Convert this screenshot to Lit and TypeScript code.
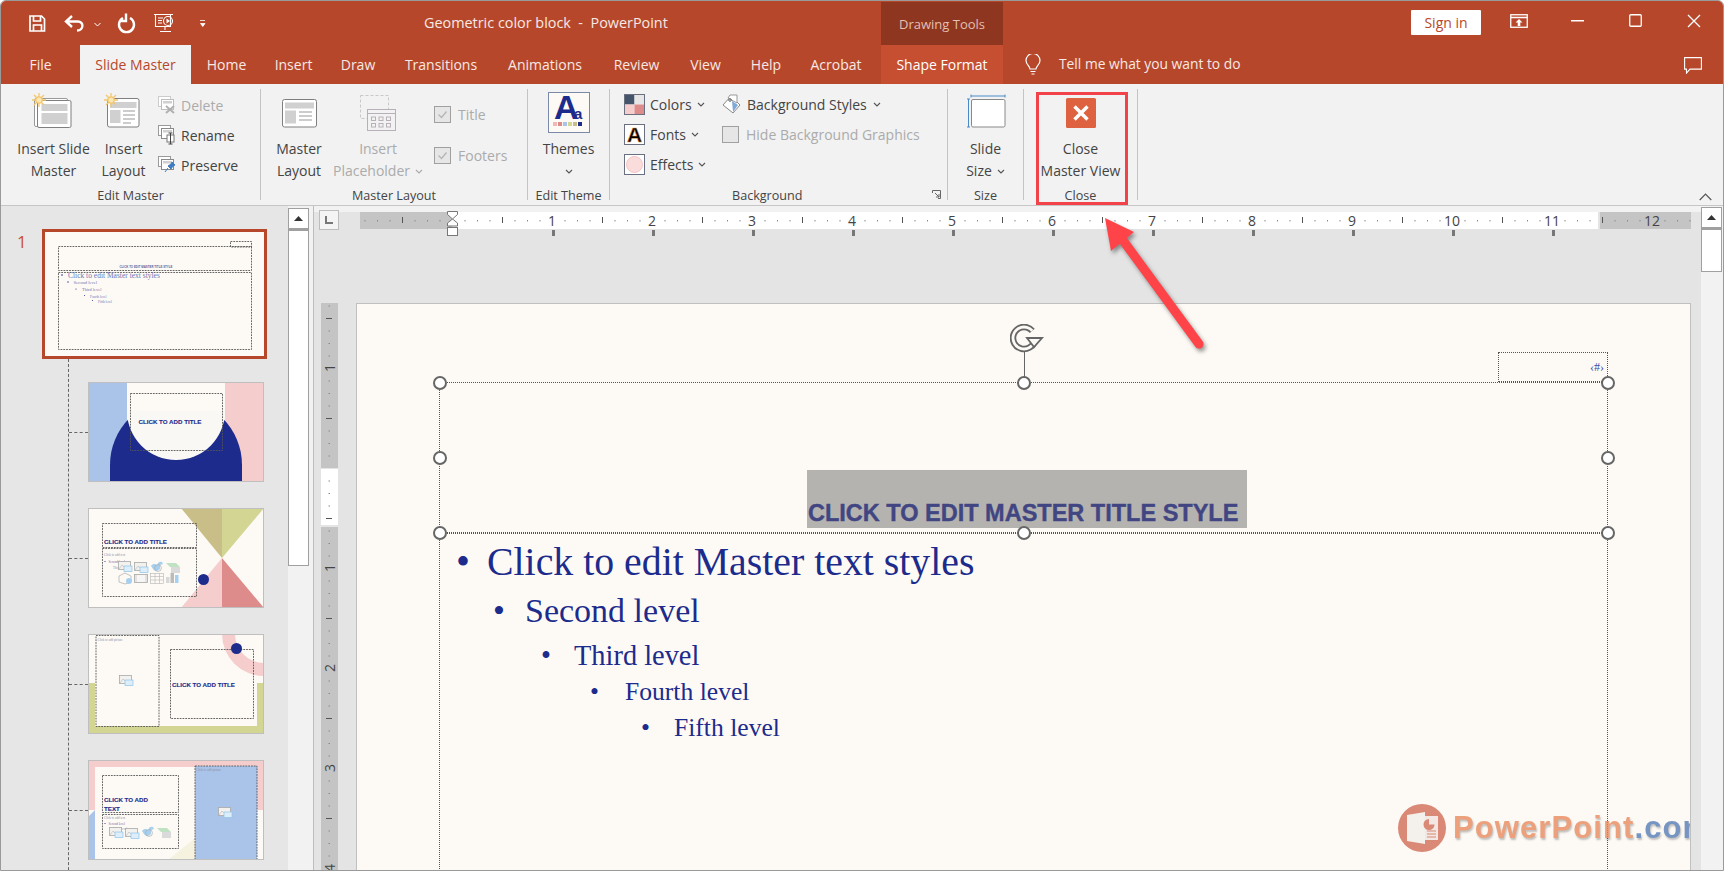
import { LitElement, html, css, svg } from "lit";
import { customElement } from "lit/decorators.js";

const NAVY = "#1C2B8C";
const CREAM = "#FDFAF5";
const BLUE = "#A9C4E8";
const PINK = "#F5CDCD";
const ROSE = "#DE8B8B";
const OLIVE = "#D3D593";
const TAN = "#C9BD88";

const chev = (c = "#555") => html`<svg class="chev" width="8" height="5" viewBox="0 0 8 5"><path d="M1 1l3 3 3-3" fill="none" stroke=${c} stroke-width="1.1"/></svg>`;

const dash = (x: number, y: number, w: number, h: number) =>
  svg`<rect x=${x} y=${y} width=${w} height=${h} fill="none" stroke="#555" stroke-width=".9" stroke-dasharray="1.8 1"/>`;

const title = (x: number, y: number, t = "CLICK TO ADD TITLE") => svg`<text class="tt" x=${x} y=${y}>${t}</text>`;

const pic = (x: number, y: number) => svg`<g transform="translate(${x} ${y})"><rect x=".5" y=".5" width="12" height="8" fill="#F3F1EE" stroke="#A8A8A8" stroke-width=".8"/><path d="M1 8l3-4 3 3 2-1 3 2" fill="none" stroke="#B5B5B5" stroke-width=".6"/><rect x="6" y="5" width="8" height="5.5" fill="#DDEEFA" stroke="#8EC4E8" stroke-width=".7"/></g>`;
const bird = (x: number, y: number) => svg`<g transform="translate(${x} ${y})"><path d="M1 6c2-3 5-2 6-1 1-3 3-4 5-3l1 2-3 1 0 4c-3 3-6 2-7 0z" fill="#A7D0F0"/><circle cx="8" cy="8" r="3.4" fill="none" stroke="#AAA" stroke-width=".7"/></g>`;
const hat = (x: number, y: number) => svg`<g transform="translate(${x} ${y})"><path d="M0 1h10l4 4H4z" fill="#BFE3C2"/><rect x="5" y="5" width="9" height="6" fill="#DADADA"/></g>`;
const cube = (x: number, y: number) => svg`<g transform="translate(${x} ${y})"><path d="M1 3l6-3 6 3v6l-6 2-6-2z" fill="none" stroke="#AAA" stroke-width=".7"/><circle cx="11" cy="8" r="3" fill="#A7D0F0"/></g>`;
const video = (x: number, y: number) => svg`<g transform="translate(${x} ${y})"><rect x=".5" y=".5" width="13" height="8" fill="#E2E2E2" stroke="#A8A8A8" stroke-width=".8"/><rect x="3" y="1" width="8" height="7" fill="#F6F6F6"/></g>`;
const table = (x: number, y: number) => svg`<g transform="translate(${x} ${y})" fill="none" stroke="#B5B5B5" stroke-width=".6"><rect x=".5" y=".5" width="13" height="10"/><path d="M.5 3.5h13M.5 7h13M5 .5v10M9.5 .5v10"/></g>`;
const chart = (x: number, y: number) => svg`<g transform="translate(${x} ${y})"><rect x="0" y="5" width="3.5" height="6" fill="#D8D8D8"/><rect x="4.5" y="1" width="3.5" height="10" fill="#BBB"/><rect x="9" y="3" width="3.5" height="8" fill="#A7D0F0"/></g>`;

const thumb1 = html`<svg width="219" height="124" viewBox="45 231 219 124">
  <rect x="45" y="231" width="219" height="124" fill=${CREAM}/>
  ${dash(58.5, 245.5, 193, 24)}${dash(58.5, 271.5, 193, 77)}${dash(230.5, 240.5, 21, 5.5)}
  <text class="tiny-title" x="119.5" y="267">CLICK TO EDIT MASTER TITLE STYLE</text>
  <circle cx="62" cy="274" r=".8" fill=${NAVY}/><text class="t1" x="68" y="276.5">Click to edit Master text styles</text>
  <circle cx="68" cy="281" r=".7" fill=${NAVY}/><text class="t2" x="73.5" y="283">Second level</text>
  <circle cx="76" cy="288" r=".6" fill=${NAVY}/><text class="t3" x="82" y="290">Third level</text>
  <circle cx="84.5" cy="294.5" r=".5" fill=${NAVY}/><text class="t4" x="90" y="296.5">Fourth level</text>
  <circle cx="92.5" cy="299.5" r=".5" fill=${NAVY}/><text class="t4" x="98" y="301.5">Fifth level</text>
</svg>`;

const thumb2 = html`<svg width="176" height="100" viewBox="88 381 176 100">
  <rect x="88" y="381" width="176" height="100" fill=${CREAM}/>
  <rect x="88" y="381" width="39" height="100" fill=${BLUE}/>
  <rect x="225" y="381" width="39" height="100" fill=${PINK}/>
  <path d="M110 481V464a66 66 0 0 1 132 0V481z" fill=${NAVY}/>
  <circle cx="176" cy="410" r="49" fill="#F9F8F4"/>
  <path d="M127 381h98v29h-98z" fill=${CREAM}/>
  ${dash(130.5, 392.5, 92, 57)}${title(138.5, 423)}
</svg>`;

const thumb3 = html`<svg width="176" height="100" viewBox="88 507 176 100">
  <rect x="88" y="507" width="176" height="100" fill=${CREAM}/>
  <path d="M181 507h41v50z" fill=${TAN}/><path d="M222 507h42l-42 50z" fill=${OLIVE}/>
  <path d="M222 557v50h-41z" fill=${PINK}/><path d="M222 557l42 50h-42z" fill=${ROSE}/>
  <circle cx="203.5" cy="578.5" r="5.5" fill=${NAVY}/>
  ${dash(102.5, 522.5, 94, 24)}${dash(102.5, 547.5, 94, 48)}${title(104, 542.5)}
  <text class="t5" x="104" y="555">Click to add text</text>
  <circle cx="105" cy="560.5" r=".6" fill=${NAVY}/><text class="t6" x="108.5" y="562">Second level</text>
  <text class="t5" x="113" y="568">Third level</text>
  ${pic(118, 560)}${pic(134, 561)}${bird(150, 559)}${hat(166, 561)}
  ${cube(118, 572)}${video(134, 573)}${table(150, 572)}${chart(166, 571)}
</svg>`;

const thumb4 = html`<svg width="176" height="100" viewBox="88 633 176 100">
  <rect x="88" y="633" width="176" height="100" fill=${CREAM}/>
  <path d="M88 682h7v43h162v-43h7v51H88z" fill=${OLIVE}/>
  <path d="M222 633h13a29 29 0 0 0 29 29v13a42 42 0 0 1-42-42z" fill=${PINK}/>
  ${dash(96, 634.5, 63, 91)}
  <text class="t5" x="97.5" y="639.5">Click to add picture</text>
  ${pic(119, 674)}
  ${dash(170.5, 648.5, 83, 69)}${title(172, 685.5)}
  <circle cx="236.5" cy="647.5" r="5.5" fill=${NAVY}/>
</svg>`;

const thumb5 = html`<svg width="176" height="100" viewBox="88 759 176 100">
  <rect x="88" y="759" width="176" height="100" fill=${CREAM}/>
  <path d="M88 759h176v50h-7v-43H95v43h-7z" fill=${PINK}/>
  <path d="M88 816l7-7v50h-7z" fill=${BLUE}/>
  <path d="M168 859l27-22v22z" fill="#F5F2E0"/>
  <rect x="195" y="765" width="62" height="94" fill=${BLUE}/>
  ${dash(195, 765, 62, 94)}
  <text class="t5" x="196" y="770">Click to add picture</text>
  ${pic(218, 806)}
  ${dash(102.5, 774.5, 76, 37)}${dash(102.5, 813.5, 76, 34)}
  ${title(104, 801, "CLICK TO ADD")}${title(104, 809.5, "TEXT")}
  <text class="t5" x="104" y="818">Click to add text</text>
  <circle cx="105" cy="822.5" r=".6" fill=${NAVY}/><text class="t6" x="108.5" y="824">Second level</text>
  <text class="t5" x="113" y="829">Third level</text>
  ${pic(109, 826)}${pic(125, 827)}${bird(141, 824)}${hat(157, 826)}
</svg>`;

const tabs = [
  { t: "File", w: 79 },
  { t: "Slide Master", w: 111, cls: "active" },
  { t: "Home", w: 71 },
  { t: "Insert", w: 63 },
  { t: "Draw", w: 66 },
  { t: "Transitions", w: 100 },
  { t: "Animations", w: 108 },
  { t: "Review", w: 75 },
  { t: "View", w: 63 },
  { t: "Help", w: 58 },
  { t: "Acrobat", w: 82 },
  { t: "", w: 4 },
  { t: "Shape Format", w: 122, cls: "ctx" },
];

const sun = (x: number, y: number) => svg`<g transform="translate(${x} ${y})" stroke="#F2C66D" stroke-width="1.3"><path d="M7 0v14M0 7h14M2 2l10 10M12 2L2 12"/><circle cx="7" cy="7" r="3.2" fill="#FBE7B4" stroke="#F2C66D"/></g>`;

const stack = (x: number, y: number, s = "#8A8A8A", s2 = "#9A9A9A") => svg`<g transform="translate(${x} ${y})"><rect x=".5" y=".5" width="12" height="10" fill="#fff" stroke=${s2}/><rect x="3.5" y="3.5" width="12" height="10" fill="#fff" stroke=${s}/><rect x="5" y="5" width="9" height="2.5" fill="#D0D0D0"/></g>`;

const ruler = () => {
  const ticks = [];
  for (let i = -7; i <= 99; i++) {
    const x = 452 + 12.5 * i;
    if (x < 361 || x > 1690) continue;
    if (i % 8 === 0) {
      if (i > 0) ticks.push(svg`<text class="rn" x=${x} y="224.5" text-anchor="middle">${i / 8}</text>`);
    } else if (i % 4 === 0) {
      ticks.push(svg`<rect x=${x} y="216" width="1" height="6" fill="#555"/>`);
    } else {
      ticks.push(svg`<rect x=${x} y="219" width="1" height="1.5" fill="#8A8A8A"/>`);
    }
  }
  const stops = [];
  for (let n = 1; n <= 11; n++) stops.push(svg`<rect x=${452 + 100 * n} y="229" width="3" height="6" fill="#777"/>`);
  return html`<svg class="hruler" width="1331" height="30" viewBox="360 205 1331 30">
    <rect x="360" y="211" width="92" height="17" fill="#C4C4C4"/>
    <rect x="452" y="211" width="1146" height="17" fill="#fff"/>
    <rect x="1600" y="211" width="91" height="17" fill="#C4C4C4"/>
    ${ticks}${stops}
    <path d="M447.5 210.5h10v3l-5 4.5-5-4.5z M447.5 225v-3l5-4 5 4v3z" fill="#fff" stroke="#777"/>
    <rect x="447.5" y="226.5" width="10" height="8" fill="#fff" stroke="#777"/>
  </svg>`;
};

const vruler = () => {
  const items = [];
  for (let i = -13; i <= 32; i++) {
    const y = 468 + 12.5 * i;
    if (y < 304 || y > 870) continue;
    if (i % 8 === 0) {
      if (i !== 0) items.push(svg`<text class="rn" transform="translate(334.5 ${y}) rotate(-90)" text-anchor="middle">${Math.abs(i) / 8}</text>`);
    } else if (i % 4 === 0) {
      items.push(svg`<rect x="326" y=${y} width="6" height="1" fill="#555"/>`);
    } else {
      items.push(svg`<rect x="328.5" y=${y} width="1.5" height="1" fill="#8A8A8A"/>`);
    }
  }
  return html`<svg class="vruler" width="17" height="567" viewBox="321 303 17 567">
    <rect x="321" y="303" width="17" height="165" fill="#C4C4C4"/>
    <rect x="321" y="469" width="17" height="56" fill="#fff"/>
    <rect x="321" y="527" width="17" height="343" fill="#C4C4C4"/>
    ${items}
  </svg>`;
};

const handles = [
  [440, 382], [1024, 382], [1608, 382],
  [440, 457], [1608, 457],
  [440, 532], [1024, 532], [1608, 532],
];

const levels = [
  { t: "Click to edit Master text styles", c: "l1" },
  { t: "Second level", c: "l2" },
  { t: "Third level", c: "l3" },
  { t: "Fourth level", c: "l4" },
  { t: "Fifth level", c: "l5" },
];

@customElement("app-root")
export class AppRoot extends LitElement {
  static styles = css`
    :host { display: block; width: 1724px; height: 871px; font-family: "Open Sans", "Noto Sans", sans-serif; font-size: 14px; color: #444; }
    * { box-sizing: border-box; }
    svg { display: block; flex: none; }
    .app { position: relative; width: 1724px; height: 871px; border: 1px solid #9A9A9A; border-radius: 6px 6px 0 0; overflow: hidden; display: flex; flex-direction: column; background: #E6E6E6; }

    .titlebar { height: 44px; flex: none; background: #B7472A; display: flex; color: #fff; }
    .doc { width: 457px; flex: none; font-size: 14.4px; line-height: 44px; color: #F6E9E5; white-space: pre; }
    .ctx-head { width: 122px; flex: none; margin-top: 1px; background: #8F3620; color: #E4BFB2; font-size: 13px; display: flex; align-items: center; justify-content: center; }
    .signin { margin: 9px 0 0 408px; width: 70px; height: 25px; background: #fff; color: #B7472A; border-radius: 1px; display: flex; align-items: center; justify-content: center; font-size: 14px; }
    .restore { margin: 13px 0 0 29px; }
    .min { margin: 19px 0 0 43px; }
    .max { margin: 13px 0 0 45px; }
    .close { margin: 13px 0 0 45px; }

    .tabs { height: 39px; flex: none; background: #B7472A; display: flex; color: #F6E9E5; align-items: stretch; }
    .tab { display: flex; align-items: center; justify-content: center; font-size: 14px; white-space: nowrap; }
    .tab.active { background: #F2F2F2; color: #B7472A; }
    .tab.ctx { background: #C54F30; color: #fff; }
    .bulb { margin: 9px 0 0 22px; }
    .tell { margin-left: 18px; line-height: 37px; font-size: 13.8px; color: #F6E9E5; }
    .comment { margin: 12px 0 0 auto; margin-right: 21px; }

    .ribbon { height: 122px; flex: none; background: #F2F2F2; border-bottom: 1px solid #C6C6C6; display: flex; }
    .sep { width: 1px; flex: none; margin: 5px 0; background: #C4C4C4; }
    .group { flex: none; display: flex; flex-direction: column; height: 121px; }
    .content { height: 102px; flex: none; display: flex; }
    .label { height: 19px; flex: none; font-size: 12.6px; line-height: 19px; text-align: center; color: #444; white-space: nowrap; }
    .g1 { width: 259px; } .g1 .content { padding-left: 6px; }
    .g2 { width: 266px; } .g2 .content { padding-left: 14px; }
    .g3 { width: 81px; } .g3 .content { padding-left: 14px; }
    .g4 { width: 337px; } .g4 .content { padding-left: 14px; }
    .g5 { width: 75px; }
    .g6 { width: 113px; }
    .big { display: flex; flex-direction: column; align-items: center; line-height: 22px; font-size: 14px; white-space: nowrap; flex: none; }
    .line { display: flex; align-items: center; gap: 5px; height: 22px; }
    .dis { color: #ABABAB; }
    .col { display: flex; flex-direction: column; flex: none; }
    .small-col { padding-top: 6px; margin-left: 11px; }
    .small { height: 30px; display: flex; align-items: center; gap: 5px; font-size: 14px; white-space: nowrap; }
    .checks { padding-top: 20px; margin-left: 9px; gap: 21px; }
    .chk { height: 20px; display: flex; align-items: center; gap: 7px; font-size: 14px; color: #ABABAB; white-space: nowrap; }
    .box { width: 17px; height: 17px; background: #E6E6E6; border: 1px solid #A0A0A0; display: block; }
    .bg1 { width: 98px; padding-top: 5px; }
    .bg2 { padding-top: 5px; }
    .bg-row { height: 30px; display: flex; align-items: center; gap: 5px; font-size: 14px; white-space: nowrap; }
    .bg-row.w { gap: 6px; }
    .labelrow { display: flex; justify-content: space-between; padding: 0 6px 0 122px; }
    .launcher { margin-top: 4px; }

    .work { flex: 1; min-height: 0; display: flex; }
    .panel { width: 287px; flex: none; background: #E6E6E6; overflow: hidden; padding-top: 23px; }
    .first { display: flex; height: 130px; }
    .num { width: 41px; padding: 0 0 0 16px; font-size: 17px; line-height: 26px; color: #C8502F; }
    .frame { width: 225px; height: 130px; border: 3px solid #B7472A; flex: none; background: ${css([CREAM] as any)}; }
    .layouts { margin-left: 67px; border-left: 1px dashed #666; padding: 23px 0 40px 0; display: flex; flex-direction: column; gap: 26px; }
    .lrow { display: flex; align-items: center; height: 100px; flex: none; }
    .lrow i { width: 19px; border-top: 1px dashed #666; display: block; flex: none; }
    .th { width: 176px; height: 100px; position: relative; flex: none; }
    .th::after { content: ""; position: absolute; inset: 0; border: 1px solid #BFBFBF; }

    .sbar { width: 25px; flex: none; background: #F2F2F2; padding-top: 2px; display: flex; flex-direction: column; }
    .up { width: 21px; height: 21px; flex: none; background: #fff; border: 1px solid #A0A0A0; display: flex; align-items: center; justify-content: center; }
    .thumb { width: 21px; flex: none; background: #fff; border: 1px solid #A0A0A0; border-top-width: 2px; }
    .left-thumb { height: 337px; }
    .vline { width: 1px; flex: none; background: #BDBDBD; }
    .editor { flex: 1; min-width: 0; background: #E4E4E4; display: flex; flex-direction: column; }
    .hrow { height: 97px; flex: none; display: flex; background: linear-gradient(#F2F2F2 6px, #E4E4E4 6px); }
    .corner { width: 20px; height: 20px; margin: 4px 0 0 5px; background: #F4F4F4; border: 1px solid #BDBDBD; display: flex; align-items: center; justify-content: center; flex: none; }
    .hruler { margin-left: 21px; }
    .crow { flex: 1; display: flex; padding-left: 7px; padding-right: 10px; min-height: 0; }
    .vruler { margin-right: 18px; }
    .slide { flex: 1; position: relative; background: ${css([CREAM] as any)}; border: 1px solid #C0C0C0; border-bottom: none; overflow: hidden; }
    .rsbar { width: 22px; flex: none; background: #F2F2F2; padding-top: 1px; display: flex; flex-direction: column; }
    .r-thumb { height: 44px; }

    .dashed { position: absolute; border: 1px dotted #555; }
    .titlebox { left: 82px; top: 78px; width: 1169px; height: 151px; }
    .bodybox { left: 82px; top: 229px; width: 1169px; height: 360px; }
    .datebox { left: 1141px; top: 48px; width: 110px; height: 30px; color: #3D4BAA; font-family: "Liberation Serif", serif; font-size: 12px; display: flex; align-items: center; justify-content: flex-end; padding: 1px 3px 0 0; }
    .sel { position: absolute; left: 450px; top: 166px; width: 440px; height: 58px; background: #B5B3B0; display: flex; align-items: flex-end; padding: 0 0 0 1px; }
    .sel span { font: 700 23.5px/30px "Liberation Sans", sans-serif; color: #414683; -webkit-text-stroke: .4px #414683; white-space: nowrap; }
    .handle { position: absolute; width: 14px; height: 14px; margin: -7px 0 0 -7px; border-radius: 50%; background: #fff; border: 2px solid #666; }
    .stem { position: absolute; left: 667px; top: 46px; width: 1px; height: 32px; background: #666; }
    .rot { position: absolute; left: 653px; top: 20px; }

    ul { list-style: none; margin: 0; padding: 6px 0 0; font-family: "Liberation Serif", serif; color: #1C2B8C; }
    li { display: flex; white-space: nowrap; }
    li .b { flex: none; }
    .l1 { font-size: 39.8px; line-height: 44px; padding-left: 16px; } .l1 .b { width: 31px; }
    .l2 { font-size: 34px; line-height: 44px; padding-left: 53px; margin-top: 5px; } .l2 .b { width: 32px; }
    .l3 { font-size: 28.4px; line-height: 36px; padding-left: 101px; margin-top: 5px; } .l3 .b { width: 33px; }
    .l4 { font-size: 25.6px; line-height: 32px; padding-left: 150px; margin-top: 2px; } .l4 .b { width: 35px; }
    .l5 { font-size: 25.6px; line-height: 32px; padding-left: 201px; margin-top: 4px; } .l5 .b { width: 33px; }

    .wm { position: absolute; left: 1041px; top: 500px; display: flex; align-items: center; gap: 7px; opacity: .78; }
    .wm b { font: 700 31px/48px "Liberation Sans Narrow", "Liberation Sans", sans-serif; letter-spacing: 1.1px; color: #E8875A; text-shadow: 1px 2px 2px rgba(80,80,80,.45); white-space: nowrap; }
    .wm b span { color: #5279B4; }

    .redbox { position: absolute; left: 1035px; top: 91px; width: 92px; height: 113px; border: 3px solid #F2434B; pointer-events: none; }
    .arrow { position: absolute; left: 0; top: 0; pointer-events: none; filter: drop-shadow(2px 3px 2px rgba(60,60,60,.55)); }

    .tt { font: 700 6.2px "Liberation Sans", sans-serif; fill: #1C2B8C; stroke: #1C2B8C; stroke-width: .12px; }
    .tiny-title { font: 700 2.9px "Liberation Sans", sans-serif; fill: #5A5F9C; }
    .t1 { font: 7.5px "Liberation Serif", serif; fill: #6E75B4; }
    .t2 { font: 4.6px "Liberation Serif", serif; fill: #6E75B4; }
    .t3 { font: 4.4px "Liberation Serif", serif; fill: #6E75B4; }
    .t4 { font: 3.4px "Liberation Serif", serif; fill: #6E75B4; }
    .t5 { font: 3.2px "Liberation Serif", serif; fill: #8E8EA8; }
    .t6 { font: 3.2px "Liberation Serif", serif; fill: #7A5CA0; }
    .rn { font: 14px "Open Sans", sans-serif; fill: #444; }
    .qat { margin: 0; }
    .ic-txt { font: 900 34px "Liberation Sans", sans-serif; fill: #1C2B8C; }
    .ic-txt2 { font: 700 15px "Liberation Sans", sans-serif; fill: #1C2B8C; }
    .font-a { font: 900 21px "Liberation Sans", sans-serif; fill: #000; stroke: #E99A3A; stroke-width: .5px; }
  `;

  render() {
    return html`<div class="app">
      <div class="titlebar">
        <svg class="qat" width="423" height="44" viewBox="1 1 423 44">
          <g fill="none" stroke="#fff" stroke-width="1.7">
            <path d="M30 16h11.5l3 3v12H30z"/><path d="M33.500 16v5h7v-5M33.500 31v-6h8v6"/>
          </g>
          <path d="M72 16l-6 5.500 6 5.500M66.500 21.500H78c6 0 6 9-1 9" fill="none" stroke="#fff" stroke-width="2.400"/>
          <path d="M94.500 23l3 3 3-3" fill="none" stroke="#fff" stroke-width="1"/>
          <path d="M123 18a7.500 7.500 0 1 0 7 0M126 13.500v7.500h-6" fill="none" stroke="#fff" stroke-width="2.400" transform="translate(0 0)"/>
          <g fill="none" stroke="#fff" stroke-width="1.100">
            <path d="M154 14.500h19M155.500 14.500v12h15v-12"/><path d="M158 18h5M158 20.500h4M158 23h4"/>
            <circle cx="168" cy="21" r="4.500"/><path d="M160 31.500h11M165 27v3"/>
          </g>
          <path d="M166.500 18.500l3.500 2.500-3.500 2.500z" fill="#fff"/>
          <path d="M200 20.500h5M200.500 23.500h4.500l-2.250 3z" fill="#fff" stroke="#fff" stroke-width=".8"/>
        </svg>
        <div class="doc">Geometric color block  -  PowerPoint</div>
        <div class="ctx-head">Drawing Tools</div>
        <div class="signin">Sign in</div>
        <svg class="restore" width="18" height="14" viewBox="0 0 18 14"><rect x=".75" y=".75" width="16.500" height="12.500" fill="none" stroke="#fff" stroke-width="1.300"/><path d="M1 3.500h16" stroke="#fff" stroke-width="1.500"/><path d="M9 5l3.500 3.500H10.300v3.500H7.700V8.500H5.500z" fill="#fff"/></svg>
        <svg class="min" width="13" height="2"><rect width="13" height="1.500" fill="#fff"/></svg>
        <svg class="max" width="13" height="13"><rect x=".75" y=".75" width="11.500" height="11.500" fill="none" stroke="#fff" stroke-width="1.300" rx="1"/></svg>
        <svg class="close" width="14" height="14"><path d="M1 1l12 12M13 1L1 13" stroke="#fff" stroke-width="1.300"/></svg>
      </div>

      <div class="tabs">
        ${tabs.map((t) => html`<div class="tab ${t.cls ?? ""}" style="width:${t.w}px">${t.t}</div>`)}
        <svg class="bulb" width="16" height="21" viewBox="0 0 16 21"><path d="M5 15c0-3-4-4-4-8.500a7 7 0 0 1 14 0C15 11 11 12 11 15zM5.500 17.500h5M6.500 20h3" fill="none" stroke="#fff" stroke-width="1.200"/></svg>
        <div class="tell">Tell me what you want to do</div>
        <svg class="comment" width="18" height="17" viewBox="0 0 18 17"><path d="M.6.6h16.800v11.500H6l-3.500 4v-4H.6z" fill="none" stroke="#fff" stroke-width="1.100"/></svg>
      </div>

      <div class="ribbon">
        <div class="group g1">
          <div class="content">
            <div class="big" style="width:93px">
              <svg width="93" height="54" viewBox="7 84 93 54">
                <rect x="34.500" y="98.500" width="33" height="28" rx="1.500" fill="#fff" stroke="#999"/>
                <rect x="37.500" y="100.500" width="33.500" height="27" rx="1.500" fill="#fff" stroke="#7F7F7F"/>
                <rect x="41.500" y="104" width="26" height="7" fill="#D0D0D0"/><rect x="41.500" y="113" width="26" height="11" fill="#D0D0D0"/>
                ${sun(32, 93)}
              </svg>
              <div class="line">Insert Slide</div><div class="line">Master</div>
            </div>
            <div class="big" style="width:47px">
              <svg width="47" height="54" viewBox="100 84 47 54">
                <rect x="107.500" y="98.500" width="31.500" height="28.500" rx="2" fill="#fff" stroke="#7F7F7F"/>
                <rect x="110" y="102" width="26.500" height="6" fill="#D0D0D0"/><rect x="110" y="110" width="10.500" height="13" fill="#D0D0D0"/>
                <path d="M123 111h12M123 115h12M123 119h12M123 123h8" stroke="#999"/>
                ${sun(104, 93)}
              </svg>
              <div class="line">Insert</div><div class="line">Layout</div>
            </div>
            <div class="col small-col">
              <div class="small dis"><svg width="18" height="18" viewBox="0 0 18 18">
                ${stack(0, 0, "#BDBDBD", "#CCC")}<path d="M8 10l8 7M16 10l-8 7" stroke="#B0B0B0" stroke-width="2"/></svg>Delete</div>
              <div class="small"><svg width="18" height="20" viewBox="0 0 18 20">
                ${stack(0, 0)}<rect x="9" y="10" width="7" height="7" fill="#fff" stroke="#777"/><path d="M12.500 8v11M10.500 8h4M10.500 19h4" stroke="#444"/></svg>Rename</div>
              <div class="small"><svg width="18" height="18" viewBox="0 0 18 18">
                ${stack(0, 0)}<path d="M14 6l3 3-2 1-2 3-3-3 3-2zM10 12l-3 4" fill="#3E7CBF" stroke="#3E7CBF"/></svg>Preserve</div>
            </div>
          </div>
          <div class="label">Edit Master</div>
        </div>
        <div class="sep"></div>

        <div class="group g2">
          <div class="content">
            <div class="big" style="width:48px">
              <svg width="48" height="54" viewBox="275 84 48 54">
                <rect x="282.500" y="99.500" width="34" height="27.500" rx="2" fill="#fff" stroke="#7F7F7F"/>
                <rect x="285" y="102.500" width="29" height="6" fill="#D0D0D0"/><rect x="285" y="110.500" width="11" height="13" fill="#D0D0D0"/>
                <path d="M299 112h13M299 116h13M299 120h13" stroke="#999"/>
              </svg>
              <div class="line">Master</div><div class="line">Layout</div>
            </div>
            <div class="big dis" style="width:94px;margin-left:8px">
              <svg width="94" height="54" viewBox="331 84 94 54">
                <rect x="360.500" y="95.500" width="28" height="23" fill="none" stroke="#C8C8C8" stroke-dasharray="3 2"/>
                <rect x="367.500" y="109.500" width="28" height="21" fill="#F2F2F2" stroke="#B8B0B8"/>
                <path d="M368 113.500h27" stroke="#B8B0B8"/>
                <g fill="none" stroke="#B8B0B8"><rect x="371.500" y="117" width="4" height="3.500"/><rect x="379" y="117" width="4" height="3.500"/><rect x="386.500" y="117" width="4" height="3.500"/><rect x="371.500" y="123.500" width="4" height="3.500"/><rect x="379" y="123.500" width="4" height="3.500"/><rect x="386.500" y="123.500" width="4" height="3.500"/></g>
              </svg>
              <div class="line">Insert</div><div class="line">Placeholder ${chev("#ABABAB")}</div>
            </div>
            <div class="col checks">
              <div class="chk"><svg class="box" viewBox="0 0 15 15"><path d="M3.500 7.500l3 3 5-6" fill="none" stroke="#B5B5B5" stroke-width="1.300"/></svg>Title</div>
              <div class="chk"><svg class="box" viewBox="0 0 15 15"><path d="M3.500 7.500l3 3 5-6" fill="none" stroke="#B5B5B5" stroke-width="1.300"/></svg>Footers</div>
            </div>
          </div>
          <div class="label">Master Layout</div>
        </div>
        <div class="sep"></div>

        <div class="group g3">
          <div class="content">
            <div class="big" style="width:53px">
              <svg width="53" height="54" viewBox="542 84 53 54">
                <rect x="548.500" y="92.500" width="41" height="40" fill=${CREAM} stroke="#7A8AA8"/>
                <text class="ic-txt" x="554" y="119">A</text><text class="ic-txt2" x="574" y="119">a</text>
                <rect x="553" y="122" width="4" height="4" fill="#F0B8B8"/><rect x="558" y="122" width="4" height="4" fill="#DE8B8B"/><rect x="563" y="122" width="4" height="4" fill=${BLUE}/><rect x="568" y="122" width="4" height="4" fill=${OLIVE}/><rect x="573" y="122" width="4" height="4" fill="#C9BD88"/><rect x="578" y="122" width="4" height="4" fill=${NAVY}/>
              </svg>
              <div class="line">Themes</div><div class="line">${chev()}</div>
            </div>
          </div>
          <div class="label">Edit Theme</div>
        </div>
        <div class="sep"></div>

        <div class="group g4">
          <div class="content">
            <div class="col bg1">
              <div class="bg-row"><svg width="21" height="21" viewBox="0 0 21 21"><rect x="1" y="1" width="9.500" height="9.500" fill="#44546A"/><rect x="10.500" y="1" width="9.500" height="9.500" fill="#E7E6E6"/><rect x="1" y="10.500" width="9.500" height="9.500" fill=${PINK}/><rect x="10.500" y="10.500" width="9.500" height="9.500" fill=${ROSE}/><rect x=".5" y=".5" width="20" height="20" fill="none" stroke="#6A7080"/></svg>Colors ${chev()}</div>
              <div class="bg-row"><svg width="21" height="21" viewBox="0 0 21 21"><rect x=".5" y=".5" width="20" height="20" fill="#fff" stroke="#6A7080"/><text class="font-a" x="3" y="18">A</text></svg>Fonts ${chev()}</div>
              <div class="bg-row"><svg width="21" height="21" viewBox="0 0 21 21"><rect x=".5" y=".5" width="20" height="20" fill="#fff" stroke="#6A7080"/><circle cx="10.500" cy="10.500" r="8" fill="#FBDCDC" stroke="#F4C4C4"/></svg>Effects ${chev()}</div>
            </div>
            <div class="col bg2">
              <div class="bg-row w"><svg width="19" height="20" viewBox="0 0 19 20"><path d="M1 11l8-9 9 9-7 8z" fill="#fff" stroke="#888"/><path d="M6 4l2-3h7v8z" fill="#fff" stroke="#999"/><path d="M10 7l6 4-5 7z" fill="#7FA9D8"/><circle cx="8" cy="6" r="1.300" fill="none" stroke="#666"/></svg>Background Styles ${chev()}</div>
              <div class="bg-row w dis" style="gap:7px"><span class="box"></span>Hide Background Graphics</div>
            </div>
          </div>
          <div class="labelrow">
            <div class="label">Background</div>
            <svg class="launcher" width="9" height="9" viewBox="0 0 9 9"><path d="M.5 3V.5h8v8H6M3 3l4 4M7 4v3H4" fill="none" stroke="#666"/></svg>
          </div>
        </div>
        <div class="sep"></div>

        <div class="group g5">
          <div class="content">
            <div class="big" style="width:75px">
              <svg width="75" height="54" viewBox="948 84 75 54">
                <path d="M971 96h34M971 94.500v3M1005 94.500v3M968.500 99v28M967 99h3M967 127h3" stroke="#4A8AC8" fill="none"/>
                <rect x="971.500" y="99.500" width="33.500" height="27.500" rx="1.500" fill="#fff" stroke="#888"/>
              </svg>
              <div class="line">Slide</div><div class="line">Size ${chev()}</div>
            </div>
          </div>
          <div class="label">Size</div>
        </div>
        <div class="sep"></div>

        <div class="group g6">
          <div class="content">
            <div class="big" style="width:113px">
              <svg width="113" height="54" viewBox="1024 84 113 54">
                <rect x="1066" y="98" width="30" height="30" rx="1.500" fill="#DF6240"/>
                <path d="M1074.500 106.500l13 13M1087.500 106.500l-13 13" stroke="#fff" stroke-width="3.400"/>
              </svg>
              <div class="line">Close</div><div class="line">Master View</div>
            </div>
          </div>
          <div class="label">Close</div>
        </div>
        <div class="sep"></div>
        <svg style="margin:109px 0 0 561px" width="13" height="8" viewBox="0 0 13 8"><path d="M.7 7L6.500 1l5.800 6" fill="none" stroke="#555" stroke-width="1.200"/></svg>
      </div>

      <div class="work">
        <div class="panel">
          <div class="first">
            <div class="num">1</div>
            <div class="frame">${thumb1}</div>
          </div>
          <div class="layouts">
            <div class="lrow"><i></i><div class="th">${thumb2}</div></div>
            <div class="lrow"><i></i><div class="th">${thumb3}</div></div>
            <div class="lrow"><i></i><div class="th">${thumb4}</div></div>
            <div class="lrow"><i></i><div class="th">${thumb5}</div></div>
          </div>
        </div>
        <div class="sbar">
          <div class="up"><svg width="9" height="5"><path d="M4.500 0l4.500 5H0z" fill="#333"/></svg></div>
          <div class="thumb left-thumb"></div>
        </div>
        <div class="vline"></div>
        <div class="editor">
          <div class="hrow">
            <div class="corner"><svg width="8" height="8"><path d="M1 0v7h7" fill="none" stroke="#777" stroke-width="2"/></svg></div>
            ${ruler()}
          </div>
          <div class="crow">
            ${vruler()}
            <div class="slide">
              <div class="dashed datebox">‹#›</div>
              <div class="dashed titlebox"></div>
              <div class="dashed bodybox">
                <ul>${levels.map((l) => html`<li class=${l.c}><span class="b">•</span><span>${l.t}</span></li>`)}</ul>
              </div>
              <div class="sel"><span>CLICK TO EDIT MASTER TITLE STYLE</span></div>
              <div class="stem"></div>
              <svg class="rot" width="34" height="30" viewBox="0 0 34 30">
                <circle cx="14" cy="14" r="11" fill="none" stroke="#666" stroke-width="6.500" stroke-dasharray="58 11" transform="rotate(15 14 14)"/>
                <circle cx="14" cy="14" r="11" fill="none" stroke="#FDFAF5" stroke-width="2.800" stroke-dasharray="58 11" transform="rotate(15 14 14)"/>
                <path d="M17 14h15l-8 9z" fill="#FDFAF5" stroke="#666" stroke-width="1.800"/>
              </svg>
              ${handles.map(([x, y]) => html`<div class="handle" style="left:${x - 357}px;top:${y - 303}px"></div>`)}
              <div class="wm">
                <svg width="48" height="48" viewBox="0 0 48 48">
                  <circle cx="24" cy="24" r="24" fill="#CF6A52"/>
                  <path d="M9 11l18-3v32L9 37z" fill="#F2EFEC"/><path d="M27 12h13v24H27z" fill="#F2EFEC" opacity=".9"/>
                  <path d="M31 15a5.500 5.500 0 1 0 5.500 5.500H31z" fill="#CF6A52"/><path d="M29 27h9M29 30h9M29 33h9" stroke="#CF6A52"/>
                </svg>
                <b>PowerPoint<span>.com.vn</span></b>
              </div>
            </div>
          </div>
        </div>
        <div class="rsbar">
          <div class="up"><svg width="9" height="5"><path d="M4.500 0l4.500 5H0z" fill="#333"/></svg></div>
          <div class="thumb r-thumb"></div>
        </div>
      </div>

      <div class="redbox"></div>
      <svg class="arrow" width="1722" height="869" viewBox="1 1 1722 869">
        <path d="M1122 239L1199 344" stroke="#FF4449" stroke-width="9" stroke-linecap="round"/>
        <path d="M1105 218l29 14-23 19z" fill="#FF4449"/>
      </svg>
    </div>`;
  }
}
